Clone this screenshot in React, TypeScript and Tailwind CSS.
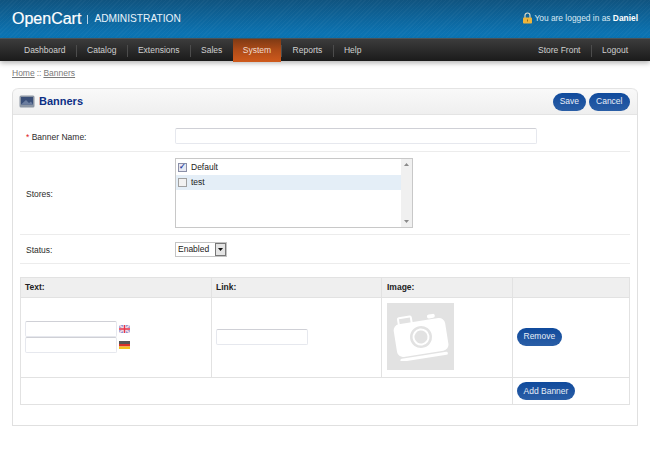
import React from "react";

const navLeft = ["Dashboard", "Catalog", "Extensions", "Sales", "System", "Reports", "Help"];

function NavItem({ label, active }: { label: string; active?: boolean }) {
  return (
    <a
      className={
        active
          ? "flex h-[23px] items-center px-[10.25px] text-[#f0dccf] bg-gradient-to-b from-[#7f3a14] via-[#b04c18] to-[#cf5a1c]"
          : "flex h-[23px] items-center px-[10.25px] text-[#d0d0d0]"
      }
    >
      {label}
    </a>
  );
}

function Sep() {
  return <span className="my-[6px] h-[12px] w-px bg-[#4c4c4c]" />;
}

function Button({ children, wide }: { children: React.ReactNode; wide?: boolean }) {
  return (
    <a
      className={
        wide
          ? "flex h-[18px] items-center rounded-[9px] bg-gradient-to-b from-[#0f4a9c] to-[#2a5ea6] px-[7.5px] text-[8.5px] leading-none text-[#e8eef7]"
          : "flex h-[18px] items-center rounded-[9px] bg-gradient-to-b from-[#0f4a9c] to-[#2a5ea6] px-[6.5px] text-[8.5px] leading-none text-[#e8eef7]"
      }
    >
      {children}
    </a>
  );
}

function TextInput({ className }: { className: string }) {
  return (
    <input
      type="text"
      className={"block h-[16px] rounded-[2px] border border-[#e6e8ee] border-t-[#cfd0d6] bg-white " + className}
    />
  );
}

function FormRow({ label, required, className, children }: { label: string; required?: boolean; className: string; children: React.ReactNode }) {
  return (
    <div className={"flex items-center border-b border-[#ececec] " + className}>
      <div className="w-[155px] pl-[6px] pt-[3px] text-[8.5px] text-[#2c2c2c]">
        {required && <span className="text-[#e02020]">* </span>}
        {label}
      </div>
      {children}
    </div>
  );
}

function UkFlag() {
  return (
    <svg width="11" height="8" viewBox="0 0 11 8" className="block">
      <rect width="11" height="8" fill="#8d95d6" />
      <path d="M0 0 11 8M11 0 0 8" stroke="#f0d8e0" strokeWidth="1.6" />
      <path d="M5.5 0V8M0 4H11" stroke="#f4dfe4" strokeWidth="2.6" />
      <path d="M5.5 0V8M0 4H11" stroke="#e8344a" strokeWidth="1.3" />
    </svg>
  );
}

function DeFlag() {
  return (
    <svg width="11" height="8" viewBox="0 0 11 8" className="block">
      <rect width="11" height="3" fill="#555" />
      <rect y="3" width="11" height="2.5" fill="#d8322a" />
      <rect y="5.5" width="11" height="2.5" fill="#f2c21c" />
    </svg>
  );
}

function Arrow({ up }: { up?: boolean }) {
  return (
    <svg width="5" height="3" viewBox="0 0 5 3" className="block">
      <path d={up ? "M0 3 2.5 0 5 3Z" : "M0 0 5 0 2.5 3Z"} fill="#8a8a8a" />
    </svg>
  );
}

export default function App() {
  return (
    <div className="min-h-[453px] bg-white font-['Liberation_Sans',Arial,sans-serif] text-[8.5px] text-[#333]">
      <header className="flex h-[38px] items-center justify-between bg-[repeating-linear-gradient(135deg,rgba(255,255,255,0.03)_0px,rgba(255,255,255,0.03)_1px,transparent_1px,transparent_3px),linear-gradient(to_bottom,#105480,#0b77b8)] pl-[12px] pr-[12px]">
        <div className="flex items-center">
          <span className="text-[16px] font-normal leading-none text-white [-webkit-text-stroke:0.2px_white]">OpenCart</span>
          <span className="ml-[6px] h-[9px] w-px bg-[#b5d3e8]" />
          <span className="ml-[6px] text-[10.2px] leading-none text-[#eaf3fa]">ADMINISTRATION</span>
        </div>
        <div className="mb-[2px] flex items-center text-[8.4px] text-[#dbe9f3]">
          <svg width="11" height="12" viewBox="0 0 11 12" className="mr-[1px]">
            <path d="M3 6V3.5a2.5 2.5 0 0 1 5 0V6" fill="none" stroke="#d9d9c8" strokeWidth="1.2" />
            <rect x="1" y="5.5" width="9" height="6" rx="0.8" fill="#eeb53c" />
            <rect x="5" y="7.5" width="1" height="2" fill="#9a6a10" />
          </svg>
          <span>
            You are logged in as <b className="text-white">Daniel</b>
          </span>
        </div>
      </header>

      <nav className="relative flex h-[23px] items-stretch justify-between border-t border-[#4a5358] bg-gradient-to-b from-[#3c3c3c] to-[#1b1b1b] pl-[13.75px] pr-[11.75px] shadow-[0_2px_5px_rgba(0,0,0,0.3)]">
        <div className="flex items-start">
          {navLeft.map((item, i) => (
            <React.Fragment key={item}>
              {i > 0 && item !== "System" && <Sep />}
              <NavItem label={item} active={item === "System"} />
            </React.Fragment>
          ))}
        </div>
        <div className="flex items-start">
          <NavItem label="Store Front" />
          <Sep />
          <NavItem label="Logout" />
        </div>
      </nav>

      <main className="px-[12px]">
        <div className="flex h-[27px] items-end pb-[8px] text-[#7a7a7a]">
          <a className="underline">Home</a>
          <span className="mx-[2px]">::</span>
          <a className="underline">Banners</a>
        </div>

        <section className="rounded-t-[6px] border border-t-0 border-[#e0e0e0]">
          <div className="flex h-[27px] items-center justify-between rounded-t-[6px] border-y border-[#e4e4e4] bg-gradient-to-b from-[#f9f9f9] to-[#efefef] pl-[6px] pr-[7px]">
            <div className="flex items-center">
              <svg width="16" height="13" viewBox="0 0 16 13">
                <rect x="0.5" y="0.5" width="15" height="12" rx="1.5" fill="#8c96a4" />
                <rect x="2" y="2" width="12" height="7.5" fill="#3a4f78" />
                <path d="M2 9.5 7 5l3 3 2-1.5 2 3Z" fill="#6b7d9f" />
              </svg>
              <h1 className="ml-[4px] text-[11px] font-bold leading-none text-[#0c2f85]">Banners</h1>
            </div>
            <div className="flex gap-[3px]">
              <Button>Save</Button>
              <Button wide>Cancel</Button>
            </div>
          </div>

          <div className="px-[7px] pb-[20px]">
            <FormRow label="Banner Name:" required className="h-[37px] pt-[5px]">
              <TextInput className="w-[362px]" />
            </FormRow>

            <FormRow label="Stores:" className="h-[83px]">
              <div className="flex h-[70px] w-[238px] border border-[#c8c8c8] bg-white text-[8.5px] text-[#222]">
                <div className="flex-1">
                  <div className="flex h-[16px] items-center pl-[2px]">
                    <span className="mr-[4px] flex h-[9px] w-[9px] items-center justify-center border border-[#8a8fa8] bg-[#e6e8f2] text-[8px] font-bold leading-none text-[#2a3fa0]">✓</span>
                    Default
                  </div>
                  <div className="flex h-[15px] items-center bg-[#e4eef7] pl-[2px]">
                    <span className="mr-[4px] h-[9px] w-[9px] border border-[#a0a0a0] bg-[#f2f2f2]" />
                    test
                  </div>
                </div>
                <div className="flex w-[11px] flex-col items-center justify-between bg-[#f0f0f0] py-[4px]">
                  <Arrow up />
                  <Arrow />
                </div>
              </div>
            </FormRow>

            <FormRow label="Status:" className="h-[29px]">
              <div className="flex h-[15px] w-[52px] items-center justify-between border border-[#c4c4c4] bg-white pl-[2px] text-[8.5px] text-[#222]">
                Enabled
                <span className="flex h-[13px] w-[11px] items-center justify-center border border-[#777] bg-[#e4e4e4]">
                  <svg width="5" height="3" viewBox="0 0 5 3"><path d="M0 0 5 0 2.5 3Z" fill="#111" /></svg>
                </span>
              </div>
            </FormRow>

            <table className="mt-[13px] w-[609px] table-fixed border-collapse border border-[#e2e2e2] text-[8.5px]">
              <colgroup>
                <col className="w-[191px]" />
                <col className="w-[170px]" />
                <col className="w-[131px]" />
                <col className="w-[117px]" />
              </colgroup>
              <thead>
                <tr className="h-[20px] bg-[#efefef] text-left text-[#222]">
                  <th className="border border-[#e2e2e2] pl-[4px] font-bold">Text:</th>
                  <th className="border border-[#e2e2e2] pl-[4px] font-bold">Link:</th>
                  <th className="border border-[#e2e2e2] pl-[5px] font-bold">Image:</th>
                  <th className="border border-[#e2e2e2]" />
                </tr>
              </thead>
              <tbody>
                <tr className="h-[80px]">
                  <td className="border border-[#e2e2e2] pb-[2px] pl-[4px]">
                    <div className="flex items-center gap-[2px]">
                      <TextInput className="w-[92px]" />
                      <UkFlag />
                    </div>
                    <div className="flex items-center gap-[2px]">
                      <TextInput className="w-[92px]" />
                      <DeFlag />
                    </div>
                  </td>
                  <td className="border border-[#e2e2e2] pb-[2px] pl-[4px]">
                    <TextInput className="w-[92px]" />
                  </td>
                  <td className="border border-[#e2e2e2] pb-[2px] pl-[5px]">
                    <div className="flex h-[67px] w-[67px] items-center justify-center bg-[#e2e2e2]">
                      <svg width="56" height="48" viewBox="0 0 56 48">
                        <g transform="rotate(-9 28 24)" fill="#fff">
                          <rect x="8" y="2" width="13" height="8" rx="1" fill="none" stroke="#fff" strokeWidth="2" />
                          <rect x="37" y="3" width="8" height="4" rx="2" />
                          <rect x="2" y="8" width="52" height="33" rx="6" />
                          <rect x="4" y="42.5" width="48" height="3" rx="1.5" />
                          <circle cx="28" cy="24" r="11" fill="#e2e2e2" />
                          <circle cx="28" cy="24" r="8.5" fill="#fff" />
                          <circle cx="28" cy="24" r="6.5" fill="#e2e2e2" />
                        </g>
                      </svg>
                    </div>
                  </td>
                  <td className="border border-[#e2e2e2] pb-[2px] pl-[4px]">
                    <div className="flex">
                      <Button>Remove</Button>
                    </div>
                  </td>
                </tr>
                <tr className="h-[27px]">
                  <td colSpan={3} className="border border-[#e2e2e2]" />
                  <td className="border border-[#e2e2e2] pl-[4px]">
                    <div className="flex">
                      <Button>Add Banner</Button>
                    </div>
                  </td>
                </tr>
              </tbody>
            </table>
          </div>
        </section>
      </main>
    </div>
  );
}
